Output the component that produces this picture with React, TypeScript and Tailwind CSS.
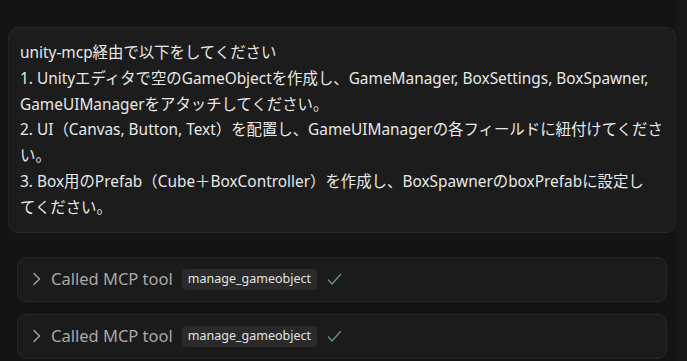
import React from 'react';

const font = { fontFamily: '"Noto Sans", "Noto Sans CJK JP", sans-serif' };

const ToolCall: React.FC<{ name: string }> = ({ name }) => {
  return (
    <div className="flex h-[45px] items-center rounded-[9px] border border-[#272727] bg-[#1b1b1b] pl-[13px]">
      <svg width="12" height="14" viewBox="0 0 12 14" className="mr-[8px]" fill="none">
        <path d="M3 1.5 L8.5 7 L3 12.5" stroke="#a3a3a3" strokeWidth="1.4" strokeLinecap="round" strokeLinejoin="round" />
      </svg>
      <span className="text-[16.5px] text-[#a8a8a8]">Called MCP tool</span>
      <span className="ml-[9px] flex h-[21px] items-center rounded-[4px] bg-[#2a2a2a] px-[6px] text-[12.5px] text-[#e2e2e2]">
        {name}
      </span>
      <svg width="15" height="13" viewBox="0 0 15 13" className="ml-[10px]" fill="none">
        <path d="M1.5 7 L5 11 L13.5 1.5" stroke="#5d9b70" strokeWidth="1.3" strokeLinecap="round" strokeLinejoin="round" />
      </svg>
    </div>
  );
};

const App: React.FC = () => {
  return (
    <div className="flex min-h-screen bg-[#141414]" style={font}>
      <div className="w-[676px] pl-[8px] pt-[27px]">
        {/* User message */}
        <div className="rounded-[10px] border border-[#262626] bg-[#1c1c1c] pb-[11px] pl-[11px] pr-[4px] pt-[12px] text-[15.4px] leading-[25.8px] text-[#e8e8e8]">
          <p>unity-mcp経由で以下をしてください</p>
          <p>
            1. Unityエディタで空のGameObjectを作成し、GameManager, BoxSettings, BoxSpawner,
            <br />
            GameUIManagerをアタッチしてください。
          </p>
          <p>
            2. UI（Canvas, Button, Text）を配置し、GameUIManagerの各フィールドに紐付けてくださ
            <br />
            い。
          </p>
          <p>
            3. Box用のPrefab（Cube＋BoxController）を作成し、BoxSpawnerのboxPrefabに設定し
            <br />
            てください。
          </p>
        </div>

        {/* Tool calls */}
        <div className="mt-[24px] flex flex-col gap-[12px] px-[9px]">
          <ToolCall name="manage_gameobject" />
          <ToolCall name="manage_gameobject" />
        </div>
      </div>
      <div className="flex-1 bg-[#171717]" />
    </div>
  );
};

export default App;
